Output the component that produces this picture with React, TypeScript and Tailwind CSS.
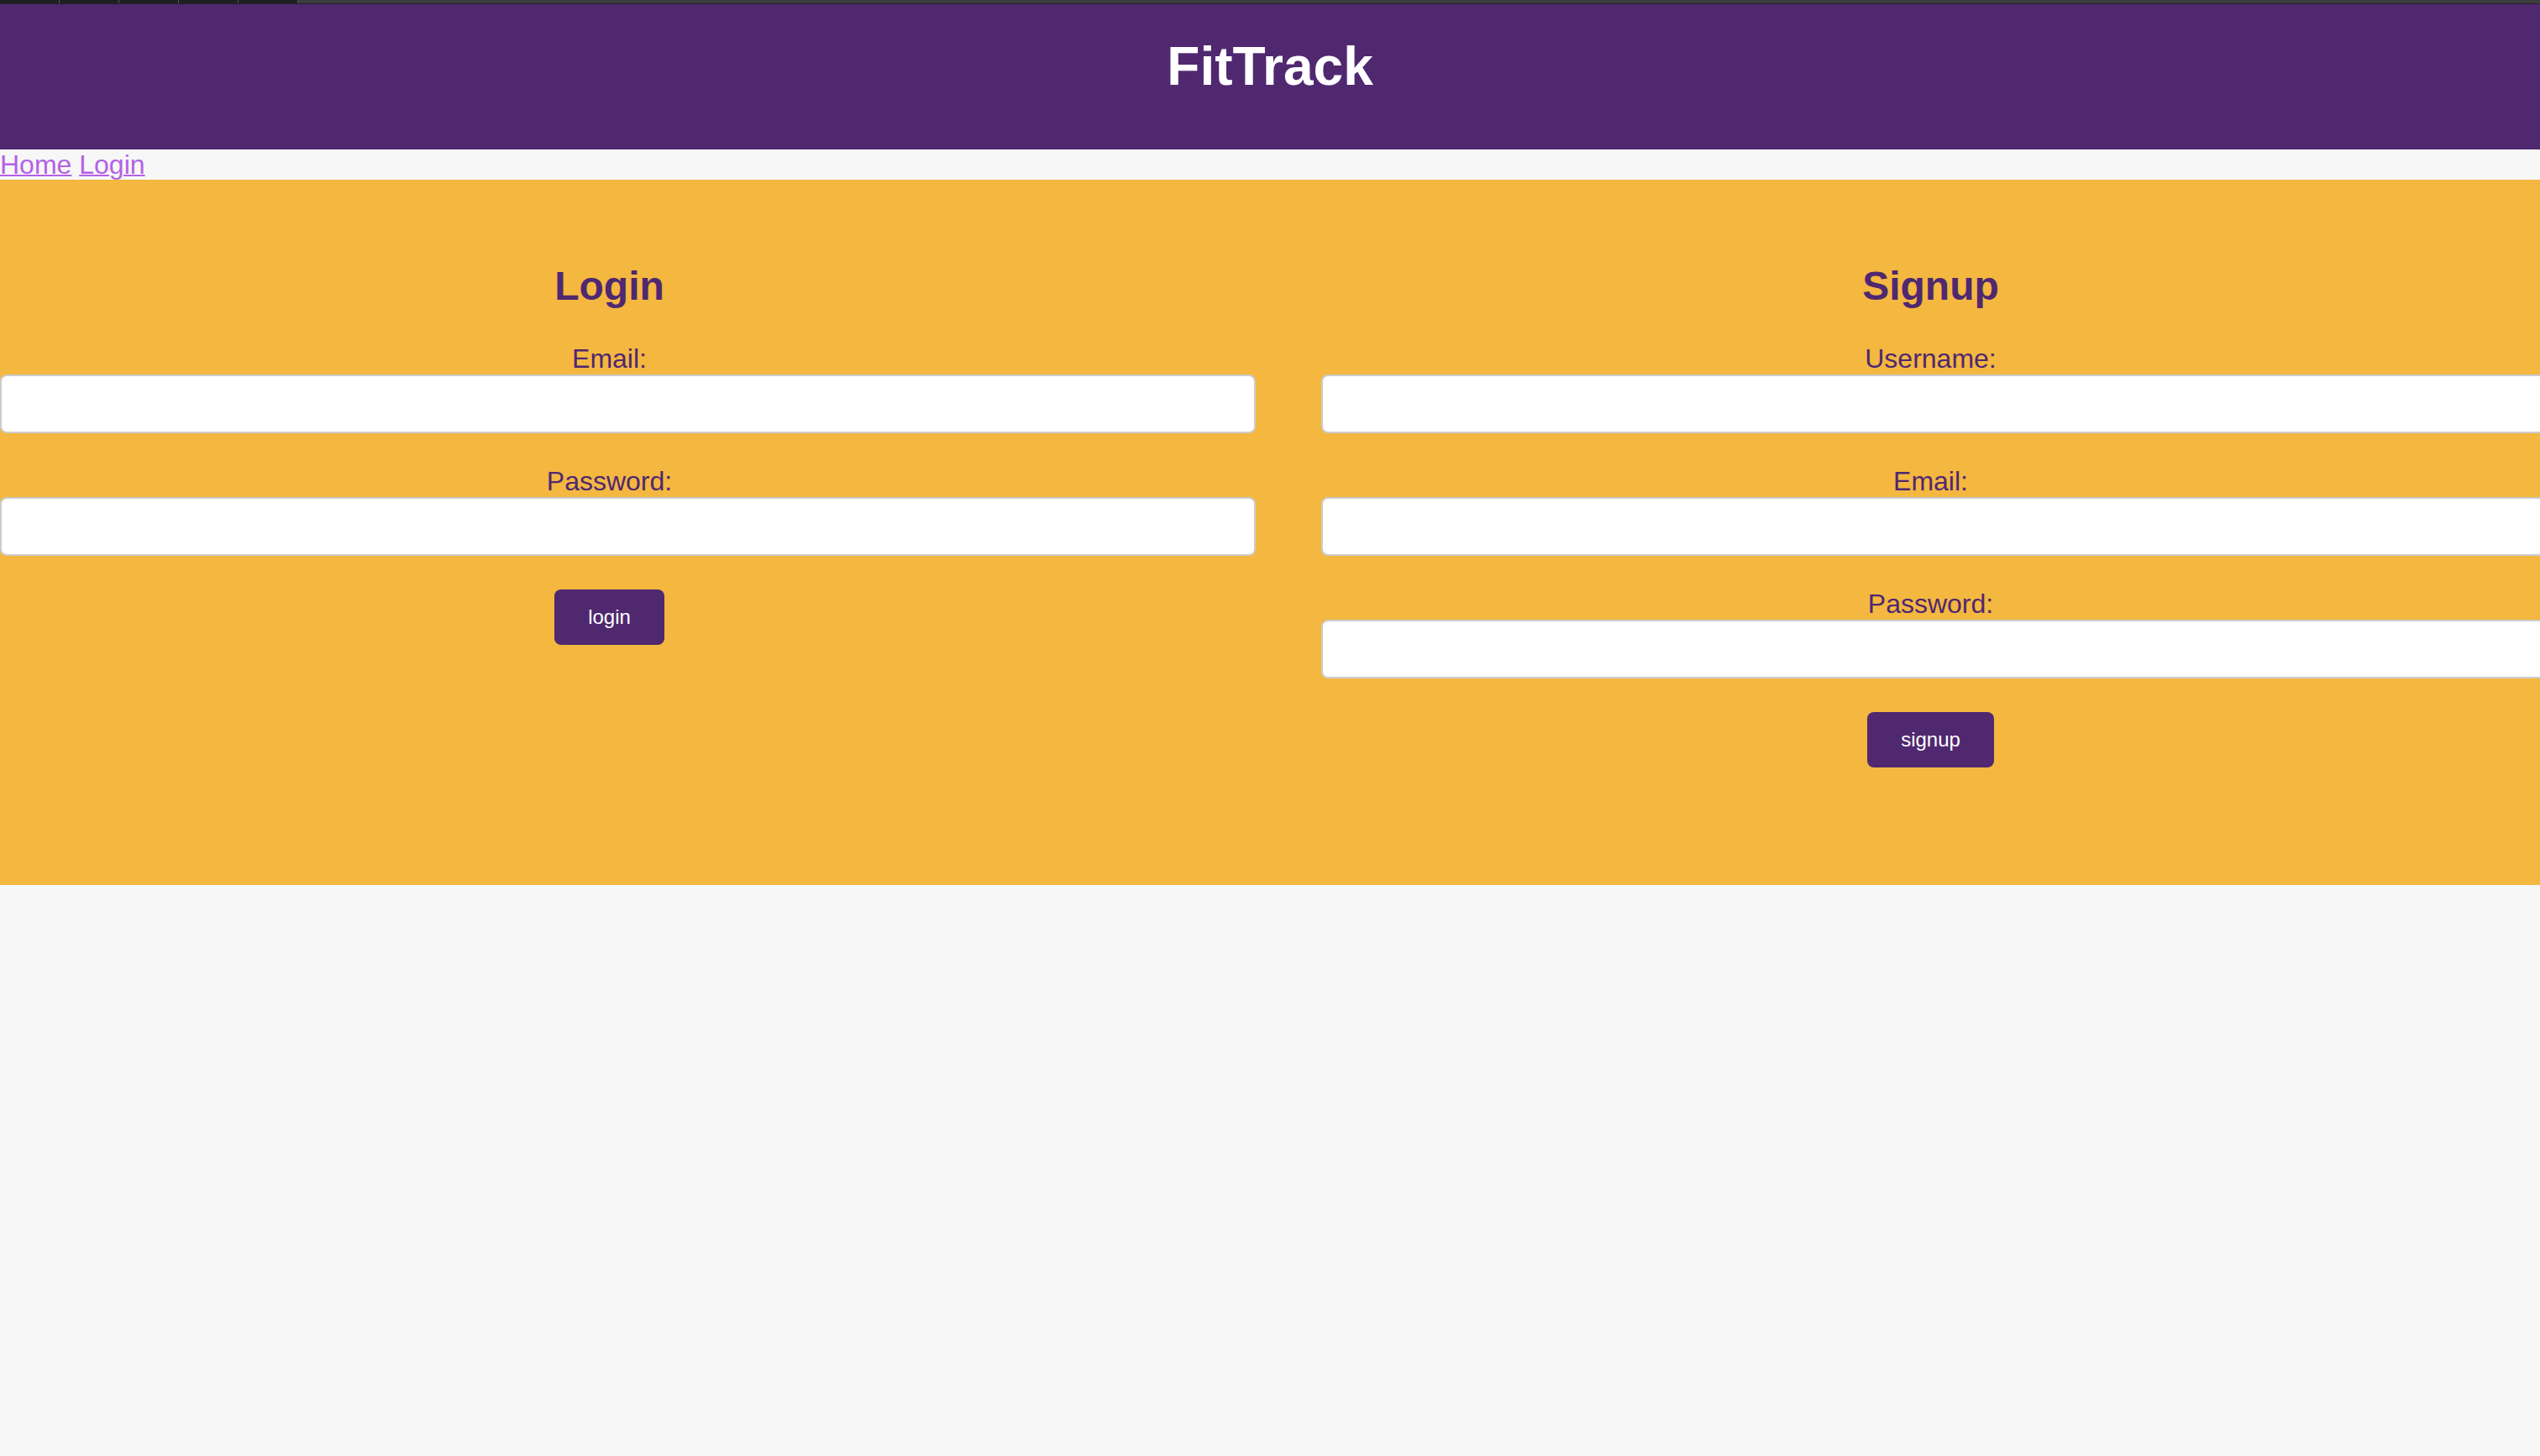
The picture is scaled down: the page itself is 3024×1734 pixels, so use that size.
const purple = "bg-[#4f2870]";

const loginFields = ["Email:", "Password:"];
const signupFields = ["Username:", "Email:", "Password:"];

function FormColumn({
  title,
  fields,
  action,
}: {
  title: string;
  fields: string[];
  action: string;
}) {
  return (
    <div className="w-[1451px] shrink-0 text-center">
      <h2 className="pt-[3px] text-[48px] leading-[55px] font-bold text-[#4f2870]">{title}</h2>
      {fields.map((f, i) => (
        <div key={f} className={i === 0 ? "mt-[39px]" : "mt-[37px]"}>
          <label className="block pt-[2px] text-[32px] leading-[37px] text-[#4f2870]">{f}</label>
          <input
            type={f === "Password:" ? "password" : f === "Email:" ? "email" : "text"}
            className="block h-[70px] w-[calc(100%+44px)] box-border rounded-[8px] border-2 border-[#cccccc] bg-white px-[20px] text-[32px] outline-none"
          />
        </div>
      ))}
      <button
        className={`mt-[40px] h-[66px] px-[40px] rounded-[8px] ${purple} text-white text-[24px] leading-[26px]`}
      >
        {action}
      </button>
    </div>
  );
}

export default function App() {
  return (
    <div className="min-h-screen w-full overflow-hidden bg-[#f7f7f7] font-['Liberation_Sans',Arial,sans-serif]">
      {/* browser tab strip */}
      <div className="flex h-[5px] bg-[#3d3d3d] border-b border-[#222]">
        {[0, 1, 2, 3, 4].map((i) => (
          <div key={i} className="w-[71px] bg-[#1f1f1f] border-r border-[#555]" />
        ))}
      </div>

      <header className={`${purple} pt-[37px] pb-[62px] text-center`}>
        <h1 className="text-[64px] leading-[74px] font-bold text-white">FitTrack</h1>
      </header>

      <nav className="h-[36px] text-[32px] leading-[36px] text-[#b462e6]">
        <a href="#" className="underline decoration-2">Home</a>{" "}
        <a href="#" className="underline decoration-2">Login</a>
      </nav>

      <section className="flex justify-between bg-[#f4b740] pt-[96px] pb-[140px]">
        <FormColumn title="Login" fields={loginFields} action="login" />
        <FormColumn title="Signup" fields={signupFields} action="signup" />
      </section>
    </div>
  );
}
